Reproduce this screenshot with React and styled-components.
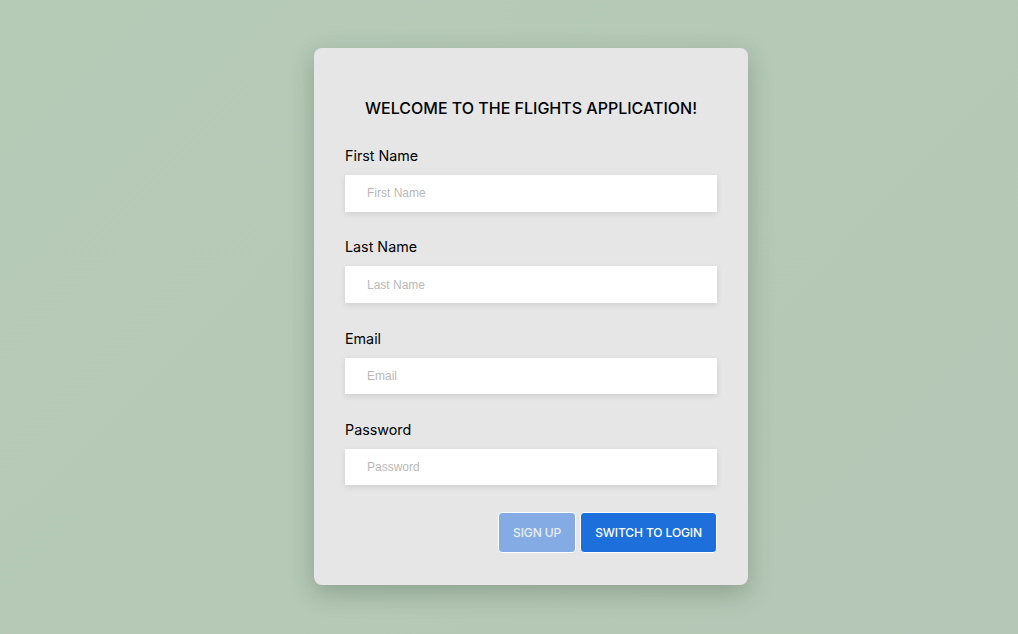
import React from "react";
import styled, { createGlobalStyle } from "styled-components";

const GlobalStyle = createGlobalStyle`
  html, body {
    margin: 0;
    padding: 0;
    height: 100%;
  }
  body {
    background: linear-gradient(135deg, #b6cbb6 0%, #b5c9b6 50%, #b5c7b6 100%);
    font-family: Inter, "Noto Sans", sans-serif;
  }
  #root {
    min-height: 100vh;
  }
`;

const Page = styled.div`
  min-height: 100vh;
  display: flex;
  justify-content: center;
  align-items: flex-start;
  padding: 48px 0 0 44px;
  box-sizing: border-box;
`;

const Card = styled.form`
  width: 434px;
  box-sizing: border-box;
  padding: 50px 31px 32px;
  background-color: #e6e6e6;
  border-radius: 8px;
  box-shadow: 0 8px 24px rgba(40, 60, 40, 0.28);
  display: flex;
  flex-direction: column;
`;

const Title = styled.h2`
  margin: 0 0 29px;
  text-align: center;
  font-size: 16px;
  line-height: 20px;
  font-weight: 500;
  color: #000;
`;

const Field = styled.div`
  display: flex;
  flex-direction: column;
  gap: 10px;
  margin-bottom: 26.8px;

  &:last-of-type {
    margin-bottom: 28.5px;
  }
`;

const Label = styled.label`
  font-size: 14.3px;
  line-height: 18px;
  color: #000;
`;

const Input = styled.input`
  height: 36.5px;
  box-sizing: border-box;
  border: none;
  outline: none;
  padding: 0 22px;
  background: #fff;
  font-family: "Liberation Sans", Arial, sans-serif;
  font-size: 12px;
  color: #333;
  box-shadow: 0 2px 6px rgba(0, 0, 0, 0.1);

  &::placeholder {
    color: #b9b9b9;
  }
`;

const Actions = styled.div`
  display: flex;
  justify-content: flex-end;
  gap: 4px;
`;

const Button = styled.button`
  height: 41px;
  padding: 0 14px;
  border: 1px solid #fff;
  border-radius: 4px;
  background-color: ${(p) => (p.$primary ? "#1d6fdc" : "#84abe4")};
  color: ${(p) => (p.$primary ? "#fff" : "#e8eefb")};
  font-family: Inter, "Noto Sans", sans-serif;
  font-size: 12px;
  font-weight: 500;
  letter-spacing: -0.1px;
  text-transform: uppercase;
  cursor: pointer;
`;

const fields = [
  { id: "firstName", label: "First Name", type: "text" },
  { id: "lastName", label: "Last Name", type: "text" },
  { id: "email", label: "Email", type: "email" },
  { id: "password", label: "Password", type: "password" },
];

export default function App() {
  return (
    <>
      <GlobalStyle />
      <Page>
        <Card onSubmit={(e) => e.preventDefault()}>
          <Title>WELCOME TO THE FLIGHTS APPLICATION!</Title>
          {fields.map((f) => (
            <Field key={f.id}>
              <Label htmlFor={f.id}>{f.label}</Label>
              <Input id={f.id} type={f.type} placeholder={f.label} />
            </Field>
          ))}
          <Actions>
            <Button type="submit">Sign up</Button>
            <Button type="button" $primary>
              Switch to login
            </Button>
          </Actions>
        </Card>
      </Page>
    </>
  );
}
